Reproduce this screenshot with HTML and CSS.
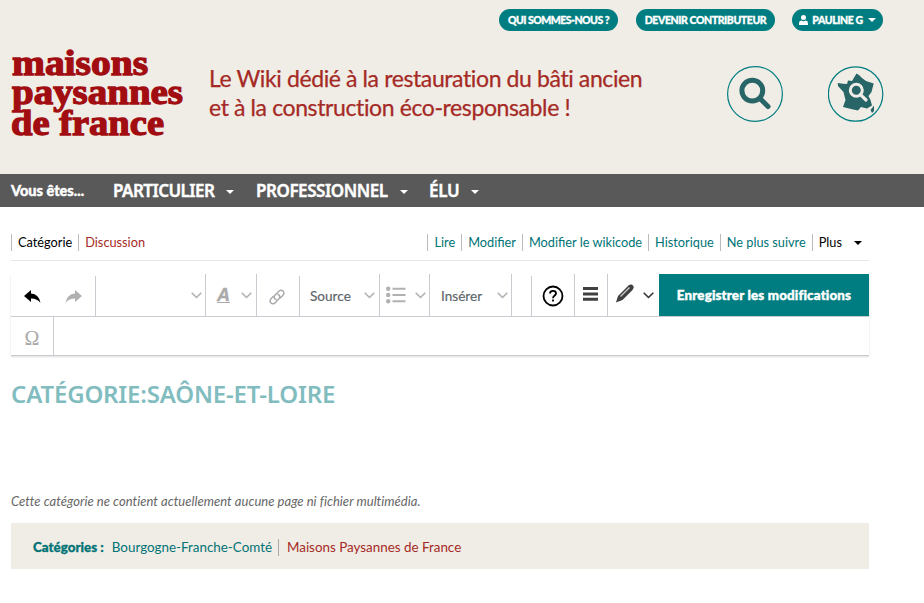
FILE: index.html
```html
<!DOCTYPE html>
<html lang="fr">
<head>
<meta charset="utf-8">
<title>Catégorie:Saône-et-Loire</title>
<link rel="stylesheet" href="styles.css">
</head>
<body>
<header class="header">
  <div class="account">
    <a class="pill pill-about">QUI SOMMES-NOUS ?</a>
    <a class="pill pill-join">DEVENIR CONTRIBUTEUR</a>
    <a class="pill pill-user"><svg width="9" height="10" viewBox="0 0 9 10"><circle cx="4.5" cy="2.6" r="2.5"/><path d="M0 10V8.2Q0 5.6 2.3 5.5Q4.5 6.8 6.7 5.5Q9 5.6 9 8.2V10Z"/></svg><span>PAULINE G</span><i class="caret"></i></a>
  </div>
  <div class="brand">
    <svg class="logo" width="174" height="100" viewBox="0 0 174 100">
      <g class="logo-text">
        <text x="1" y="35" textLength="136" lengthAdjust="spacingAndGlyphs">maisons</text>
        <text x="1" y="63.500" textLength="171" lengthAdjust="spacingAndGlyphs">paysannes</text>
        <text x="0" y="94.500" textLength="153" lengthAdjust="spacingAndGlyphs">de france</text>
      </g>
    </svg>
    <p class="tagline"><span class="tag-one">Le Wiki dédié à la restauration du bâti ancien</span><br><span class="tag-two">et à la construction éco-responsable !</span></p>
    <a class="round round-search"><svg width="56" height="56" viewBox="0 0 56 56"><circle class="ring" cx="28" cy="28" r="27.4"/><circle class="lens" cx="25.300" cy="24.600" r="10.400"/><path class="handle" d="M33 32.500L41 40.500"/></svg></a>
    <a class="round"><svg width="56" height="56" viewBox="0 0 56 56"><circle class="ring" cx="27.600" cy="28" r="27.200"/><path class="land" d="M28.500 7.500L31 9L34 12L38 15L45.700 17.500L43.500 26L40.500 30L42.500 34L44 39.500L39 42.500L33 41L30 44.500L23 43L15 41L17.500 34L15.500 26L10 20L9.700 17L15 17.700L19 18L20 14.500L24 15Z"/><path class="land" d="M46 39.500V45L44 47L42.500 44Z"/><circle class="map-lens" cx="28.300" cy="24.300" r="6"/><path class="map-handle" d="M32.500 28.700L38 34"/></svg></a>
  </div>
</header>
<nav class="nav">
  <b class="you">Vous êtes...</b>
  <a class="nav-item item-a"><span>PARTICULIER</span><i class="caret"></i></a>
  <a class="nav-item item-b"><span>PROFESSIONNEL</span><i class="caret"></i></a>
  <a class="nav-item item-c"><span>ÉLU</span><i class="caret"></i></a>
</nav>
<main class="main">
  <div class="tabs">
    <a class="tab black">Catégorie</a><a class="tab red">Discussion</a>
    <span class="fill"></span>
    <a class="tab">Lire</a><a class="tab">Modifier</a><a class="tab">Modifier le wikicode</a><a class="tab">Historique</a><a class="tab">Ne plus suivre</a><a class="tab black">Plus<i class="caret"></i></a>
  </div>
  <section class="toolbar">
    <div class="row">
      <div class="cell undo">
        <svg width="17" height="13" viewBox="0 0 17 13"><path d="M0 6L7 0V3.500Q15 4 16.500 13Q13.500 8.500 7 8.500V12Z"/></svg>
        <svg class="pale" width="17" height="13" viewBox="0 0 17 13"><path d="M17 6L10 0V3.500Q2 4 .5 13Q3.500 8.500 10 8.500V12Z"/></svg>
      </div>
      <div class="cell format short"><svg class="chev" width="11" height="7" viewBox="0 0 11 7"><path d="M.7 .8L5.500 5.500L10.300 .8"/></svg></div>
      <div class="cell style"><span class="letter">A</span><svg class="chev" width="11" height="7" viewBox="0 0 11 7"><path d="M.7 .8L5.500 5.500L10.300 .8"/></svg></div>
      <div class="cell link"><svg class="chain" width="18" height="18" viewBox="0 0 18 18"><path d="M8 11.500C6 11 5.700 8.500 7 7.200L10.800 3.300C12 2 13.800 1.800 15 3C16.200 4.200 16.200 6 15 7.200L12.500 9.700M10 6.500C12 7 12.300 9.500 11 10.800L7.200 14.700C6 16 4.200 16.200 3 15C1.800 13.800 1.800 12 3 10.800L5.500 8.300"/></svg></div>
      <div class="cell source short"><span>Source</span><svg class="chev" width="11" height="7" viewBox="0 0 11 7"><path d="M.7 .8L5.500 5.500L10.300 .8"/></svg></div>
      <div class="cell list"><svg class="pale" width="20" height="18" viewBox="0 0 20 18"><circle cx="2.200" cy="2.700" r="2.200"/><circle cx="2.200" cy="9" r="2.200"/><circle cx="2.200" cy="15.300" r="2.200"/><path d="M6.500 1.700h13v2h-13zM6.500 8h13v2h-13zM6.500 14.300h13v2h-13z"/></svg><svg class="chev" width="11" height="7" viewBox="0 0 11 7"><path d="M.7 .8L5.500 5.500L10.300 .8"/></svg></div>
      <div class="cell insert"><span>Insérer</span><svg class="chev" width="11" height="7" viewBox="0 0 11 7"><path d="M.7 .8L5.500 5.500L10.300 .8"/></svg></div>
      <div class="cell gap"></div>
      <div class="cell help short"><svg class="question" width="22" height="22" viewBox="0 0 22 22"><circle cx="11" cy="11" r="9.500"/><path d="M8 8.500C8 6.800 9.200 5.900 11 5.900C12.800 5.900 14 6.900 14 8.400C14 10.500 11 10.500 11 13.200M11 14.500V16.500"/></svg></div>
      <div class="cell menu"><svg class="dark" width="15" height="14" viewBox="0 0 15 14"><path d="M0 0h15v3H0zM0 5.400h15v3H0zM0 10.800h15v3H0z"/></svg></div>
      <div class="cell pen"><svg class="dark" width="18" height="19" viewBox="0 0 18 19"><path d="M0 18.500L2 12L12.500 1.500Q15-.5 17 1.500Q18.500 3.500 16.500 6L6.500 16Z"/><path class="shine" d="M4.500 12.500L13.500 3.500"/></svg><svg class="chev ink" width="11" height="7" viewBox="0 0 11 7"><path d="M.7 .8L5.500 5.500L10.300 .8"/></svg></div>
      <div class="save"><span>Enregistrer les modifications</span></div>
    </div>
    <div class="row second"><div class="cell omega">Ω</div></div>
  </section>
  <h1 class="title"><span>CATÉGORIE:SAÔNE-ET-LOIRE</span></h1>
  <p class="empty"><span>Cette catégorie ne contient actuellement aucune page ni fichier multimédia.</span></p>
  <footer class="cats"><b>Catégories :</b><a class="cat">Bourgogne-Franche-Comté</a><a class="cat red last">Maisons Paysannes de France</a></footer>
</main>
</body>
</html>
```

FILE: styles.css
```css
* { box-sizing: border-box; }
body { margin: 0; background: #fff; font: 13px/18px Lato, sans-serif; color: #000; overflow: hidden; }
svg { display: block; flex: none; }
span, a, b { white-space: nowrap; }
.header { height: 174px; background: #f0ede6; }
.account { display: flex; padding: 9px 41px 0 0; justify-content: flex-end; height: 46px; }
.pill { height: 22px; border-radius: 11px; background: #007d80; color: #fff; font-size: 10.5px; font-weight: 900; line-height: 22px; letter-spacing: -.5px; -webkit-text-stroke: .3px; display: flex; align-items: center; justify-content: center; }
.pill svg { fill: #fff; margin-right: 4px; }
.pill-about { width: 119px; margin-right: 18px; }
.pill-join { width: 139px; margin-right: 17px; letter-spacing: -.4px; }
.pill-user { width: 91px; letter-spacing: -.4px; }
.caret { display: block; flex: none; width: 0; height: 0; border: 4px solid transparent; border-top-color: currentColor; border-bottom: 0; margin-left: 5px; }
.brand { display: flex; padding-left: 11px; }
.logo { margin-top: -6px; overflow: visible; }
.logo-text { font: bold 36px "Liberation Serif", serif; fill: #a20d12; stroke: #a20d12; stroke-width: 1.3px; }
.tagline { margin: 18px 0 0 24px; width: 518px; font-size: 23px; line-height: 29px; letter-spacing: -.39px; -webkit-text-stroke: .25px; font-variant-ligatures: none; color: #a52a25; }
.round { width: 56px; margin-top: 20px; }
.round-search { margin-right: 45px; }
.round svg { fill: #286567; }
.round .ring { fill: none; stroke: #007d80; stroke-width: 1.2; }
.round .lens { fill: none; stroke: #286567; stroke-width: 5; }
.handle { stroke: #286567; stroke-width: 5; stroke-linecap: round; }
.map-lens { fill: #286567; stroke: #f0ede6; stroke-width: 3; }
.map-handle { stroke: #f0ede6; stroke-width: 3.2; stroke-linecap: round; }
.nav { height: 33px; background: #595959; color: #fff; display: flex; align-items: center; padding-left: 11px; }
.you { width: 102px; font-size: 14.5px; font-weight: 900; -webkit-text-stroke: .4px; }
.nav-item { display: flex; align-items: center; justify-content: space-between; font: 600 17px/33px "Noto Sans", sans-serif; letter-spacing: -.55px; -webkit-text-stroke: .4px; }
.nav-item .caret { margin-top: 3px; }
.item-a { width: 121px; margin-right: 22px; }
.item-b { width: 152px; margin-right: 21px; letter-spacing: -.45px; }
.item-c { width: 50px; letter-spacing: -.3px; }
.main { width: 858px; margin-left: 11px; }
.tabs { height: 54px; border-bottom: 1px solid #e7e7e7; display: flex; padding-top: 27px; font-size: 12.75px; }
.tab { height: 17px; border-left: 1px solid #bbb; padding: 0 6px; line-height: 17px; color: #007376; display: flex; align-items: center; }
.tab .caret { margin: 0 1px 0 12px; }
.fill { flex: 1; }
.tab.black { color: #000; }
.red, .tab.red { color: #a52a25; }
.toolbar { margin-top: 13px; border-bottom: 1px solid #c8ccd1; box-shadow: 0 1px 2px #0002; height: 82px; }
.row { display: flex; height: 43px; border-bottom: 1px solid #c8ccd1; }
.row.second { height: 38px; border: 0; }
.cell { border-left: 1px solid #c8ccd1; height: 42px; display: flex; align-items: center; color: #60666b; }
.short { height: 40px; margin-top: 2px; padding-bottom: 2px; }
.undo { width: 84px; border: 0; padding: 3px 0 0 13px; gap: 24px; }
.pale { fill: #b1b1b1; }
.chev { fill: none; stroke: #b1b1b1; stroke-width: 1.6; }
.chev.ink { stroke: #333; }
.format { width: 110px; justify-content: flex-end; padding-right: 3px; }
.style { width: 51px; padding-left: 11px; gap: 11px; }
.letter { width: 13px; font: italic bold 18px/14px "Liberation Sans", sans-serif; color: #aaa; -webkit-text-stroke: .4px; border-bottom: 1px solid #aaa; }
.link { width: 43px; padding: 3px 0 0 11px; }
.chain { fill: none; stroke: #aaa; stroke-width: 1.5; stroke-linecap: round; }
.source { width: 80px; justify-content: space-between; padding-left: 10px; padding-right: 4px; }
.list { width: 50px; padding-left: 6px; gap: 9px; }
.insert { width: 82px; justify-content: space-between; padding-left: 11px; padding-right: 3px; }
.source span, .insert span { font-size: 13.6px; padding-top: 2px; -webkit-text-stroke: .2px; }
.gap { width: 20px; }
.help { width: 43px; padding: 0 0 0 10px; }
.question { fill: none; stroke: #000; stroke-width: 1.8; }
.menu { width: 33px; padding-left: 8px; padding-bottom: 2px; }
.dark { fill: #404040; }
.pen { width: 52px; padding-left: 8px; gap: 9px; padding-bottom: 3px; }
.pen .ink { margin-top: 3px; }
.shine { fill: none; stroke: #ccc; stroke-width: 1.2; }
.save { width: 210px; height: 42px; background: #007d80; color: #fff; font-size: 13.4px; font-weight: 900; line-height: 42px; text-align: center; font-variant-ligatures: none; letter-spacing: .15px; -webkit-text-stroke: .4px; }
.row .omega { width: 43px; height: 38px; border-left: 0; border-right: 1px solid #c8ccd1; justify-content: center; font: 20px/38px "Liberation Serif", serif; color: #aaa; padding-top: 3px; }
.title { margin: 22px 0 0; font: 600 24px/32px "Noto Sans", sans-serif; letter-spacing: -.17px; color: #81bcbf; }
.empty { margin: 82px 0 0; font-size: 13px; line-height: 18px; font-style: italic; font-variant-ligatures: none; letter-spacing: .04px; color: #666; }
.cats { margin-top: 13px; height: 46px; background: #f0ede6; padding: 2px 22px 0; display: flex; align-items: center; color: #007376; font-size: 13.4px; }
.cats b { font-weight: 900; margin-right: 8px; -webkit-text-stroke: .3px; }
.cat { padding-right: 6px; }
.cat.last { border-left: 1px solid #aaa; padding-left: 8px; line-height: 17px; }
```
